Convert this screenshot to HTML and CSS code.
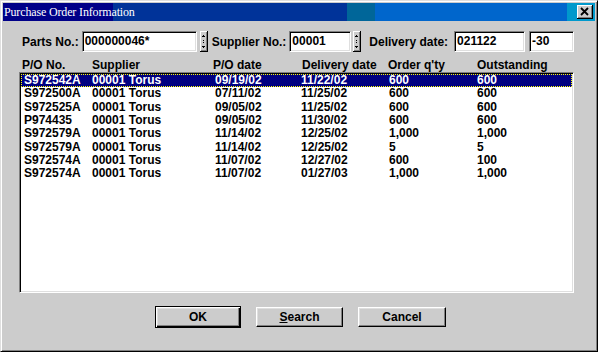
FILE: index.html
```html
<!DOCTYPE html>
<html>
<head>
<meta charset="utf-8">
<title>Purchase Order Information</title>
<link rel="stylesheet" href="styles.css">
</head>
<body>
<div class="window">
  <div class="titlebar">
    <span class="title">Purchase Order Information</span>
    <span class="close" aria-label="Close">
      <svg width="16" height="14" viewBox="0 0 16 14" shape-rendering="crispEdges">
        <rect x="0" y="0" width="16" height="14" fill="#cccccc"/>
        <rect x="0" y="0" width="15" height="1" fill="#ffffff"/>
        <rect x="0" y="0" width="1" height="13" fill="#ffffff"/>
        <rect x="0" y="13" width="16" height="1" fill="#000000"/>
        <rect x="15" y="0" width="1" height="14" fill="#000000"/>
        <rect x="1" y="12" width="14" height="1" fill="#808080"/>
        <rect x="14" y="1" width="1" height="12" fill="#808080"/>
        <path d="M4 3 L11 10 M11 3 L4 10" stroke="#000" stroke-width="1.8" fill="none" shape-rendering="geometricPrecision"/>
      </svg>
    </span>
  </div>

  <div class="fields">
    <span class="lbl">Parts No.:</span>
    <div class="input w-parts">000000046*</div>
    <span class="spin s-parts">
      <svg width="8" height="21" viewBox="0 0 8 21" shape-rendering="crispEdges">
        <rect x="0" y="0" width="8" height="21" fill="#cccccc"/>
        <rect x="0" y="0" width="7" height="1" fill="#ffffff"/>
        <rect x="0" y="0" width="1" height="20" fill="#ffffff"/>
        <rect x="0" y="20" width="8" height="1" fill="#000000"/>
        <rect x="7" y="0" width="1" height="21" fill="#000000"/>
        <rect x="1" y="19" width="6" height="1" fill="#808080"/>
        <rect x="6" y="1" width="1" height="19" fill="#808080"/>
        <rect x="3" y="4" width="1" height="1" fill="#000"/>
        <rect x="2" y="5" width="3" height="1" fill="#000"/>
        <rect x="3" y="9" width="1" height="1" fill="#000"/>
        <rect x="3" y="11" width="1" height="1" fill="#000"/>
        <rect x="2" y="15" width="3" height="1" fill="#000"/>
        <rect x="3" y="16" width="1" height="1" fill="#000"/>
      </svg>
    </span>
    <span class="lbl l-supp">Supplier No.:</span>
    <div class="input w-supp">00001</div>
    <span class="spin s-supp">
      <svg width="8" height="21" viewBox="0 0 8 21" shape-rendering="crispEdges">
        <rect x="0" y="0" width="8" height="21" fill="#cccccc"/>
        <rect x="0" y="0" width="7" height="1" fill="#ffffff"/>
        <rect x="0" y="0" width="1" height="20" fill="#ffffff"/>
        <rect x="0" y="20" width="8" height="1" fill="#000000"/>
        <rect x="7" y="0" width="1" height="21" fill="#000000"/>
        <rect x="1" y="19" width="6" height="1" fill="#808080"/>
        <rect x="6" y="1" width="1" height="19" fill="#808080"/>
        <rect x="3" y="4" width="1" height="1" fill="#000"/>
        <rect x="2" y="5" width="3" height="1" fill="#000"/>
        <rect x="3" y="9" width="1" height="1" fill="#000"/>
        <rect x="3" y="11" width="1" height="1" fill="#000"/>
        <rect x="2" y="15" width="3" height="1" fill="#000"/>
        <rect x="3" y="16" width="1" height="1" fill="#000"/>
      </svg>
    </span>
    <span class="lbl l-del">Delivery date:</span>
    <div class="input w-date">021122</div>
    <div class="input w-off">-30</div>
  </div>

  <div class="head">
    <span>P/O No.</span>
    <span>Supplier</span>
    <span>P/O date</span>
    <span>Delivery date</span>
    <span>Order q'ty</span>
    <span>Outstanding</span>
  </div>

  <div class="list">
    <div class="row selected"><span>S972542A</span><span>00001 Torus</span><span>09/19/02</span><span>11/22/02</span><span>600</span><span>600</span></div>
    <div class="row"><span>S972500A</span><span>00001 Torus</span><span>07/11/02</span><span>11/25/02</span><span>600</span><span>600</span></div>
    <div class="row"><span>S972525A</span><span>00001 Torus</span><span>09/05/02</span><span>11/25/02</span><span>600</span><span>600</span></div>
    <div class="row"><span>P974435</span><span>00001 Torus</span><span>09/05/02</span><span>11/30/02</span><span>600</span><span>600</span></div>
    <div class="row"><span>S972579A</span><span>00001 Torus</span><span>11/14/02</span><span>12/25/02</span><span>1,000</span><span>1,000</span></div>
    <div class="row"><span>S972579A</span><span>00001 Torus</span><span>11/14/02</span><span>12/25/02</span><span>5</span><span>5</span></div>
    <div class="row"><span>S972574A</span><span>00001 Torus</span><span>11/07/02</span><span>12/27/02</span><span>600</span><span>100</span></div>
    <div class="row"><span>S972574A</span><span>00001 Torus</span><span>11/07/02</span><span>01/27/03</span><span>1,000</span><span>1,000</span></div>
  </div>

  <div class="buttons">
    <button class="btn default b-ok">OK</button>
    <button class="btn b-search"><u>S</u>earch</button>
    <button class="btn b-cancel">Cancel</button>
  </div>
</div>
</body>
</html>
```

FILE: styles.css
```css
* { box-sizing: border-box; }

html, body {
  margin: 0;
  padding: 0;
  background: #cccccc;
}

body {
  width: 598px;
  height: 352px;
  overflow: hidden;
  font-family: "Liberation Sans", Arial, sans-serif;
  font-weight: bold;
  font-size: 12px;
  color: #000;
}

.window {
  width: 598px;
  height: 352px;
  background: #cccccc;
  border: 1px solid;
  border-color: #dfdfdf #000 #000 #dfdfdf;
  box-shadow: inset 1px 1px #ffffff, inset -1px -1px #808080;
  padding: 2px;
  display: flex;
  flex-direction: column;
}

/* title bar */
.titlebar {
  height: 18px;
  display: flex;
  align-items: center;
  padding: 0 2px 0 1px;
  background: linear-gradient(to right,
    #000088 0, #000088 110px,
    #003399 110px, #003399 344px,
    #006699 344px, #006699 372px,
    #0066cc 372px, #0066cc 564px,
    #0099cc 564px);
}

.title {
  font-family: "Liberation Serif", "Times New Roman", serif;
  font-weight: normal;
  font-size: 12px;
  letter-spacing: -0.15px;
  line-height: 18px;
  color: #fff;
  white-space: nowrap;
}

.close {
  margin-left: auto;
  width: 16px;
  height: 14px;
  display: flex;
}

/* field row */
.fields {
  margin-top: 10px;
  height: 21px;
  display: flex;
  align-items: center;
  padding-left: 19px;
  white-space: nowrap;
}

.lbl {
  margin-right: 3px;
}

.l-supp { margin-left: 4px; }
.l-del { margin-left: 8px; margin-right: 6px; }

.input {
  height: 21px;
  background: #fff;
  border: 1px solid;
  border-color: #808080 #ffffff #ffffff #808080;
  box-shadow: inset 1px 1px #000, inset -1px -1px #dfdfdf;
  padding-left: 2px;
  line-height: 19px;
  overflow: hidden;
}

.w-parts { width: 115px; }
.w-supp { width: 62px; }
.w-date { width: 71px; }
.w-off { width: 45px; margin-left: 4px; }

.spin {
  width: 8px;
  height: 21px;
  display: flex;
}

.s-parts { margin-left: 3px; }
.s-supp { margin-left: 2px; }

/* list header */
.head {
  margin-top: 7px;
  height: 13px;
  line-height: 13px;
  padding-left: 19px;
  display: grid;
  grid-template-columns: 70px 121px 89px 86px 89px 1fr;
  white-space: nowrap;
}

/* list */
.list {
  margin-left: 16px;
  width: 555px;
  height: 221px;
  background: #fff;
  border: 1px solid;
  border-color: #808080 #ffffff #ffffff #808080;
  box-shadow: inset 1px 1px #000, inset -1px -1px #dfdfdf;
  padding: 1px;
}

.row {
  height: 13.33px;
  line-height: 13.33px;
  padding-left: 3px;
  display: grid;
  grid-template-columns: 68px 123px 86px 88px 88px 1fr;
  white-space: nowrap;
}

.row.selected {
  background: #000080;
  color: #fff;
  outline: 1px dotted #ffff00;
  outline-offset: -1px;
}

/* buttons */
.buttons {
  margin-top: 13px;
  padding-left: 3px;
  display: flex;
  justify-content: center;
  align-items: center;
  gap: 15px;
}

.btn {
  height: 20px;
  padding: 0;
  font-family: "Liberation Sans", Arial, sans-serif;
  font-weight: bold;
  font-size: 12px;
  color: #000;
  background: #cccccc;
  border: 1px solid;
  border-color: #ffffff #000 #000 #ffffff;
  box-shadow: inset -1px -1px #808080, inset 1px 1px #dfdfdf;
}

.btn.default {
  height: 22px;
  border: 1px solid #000;
  box-shadow: inset 1px 1px #ffffff, inset -1px -1px #000, inset -2px -2px #808080, inset 2px 2px #dfdfdf;
}

.b-ok { width: 86px; }
.b-search { width: 87px; }
.b-cancel { width: 88px; }
```
